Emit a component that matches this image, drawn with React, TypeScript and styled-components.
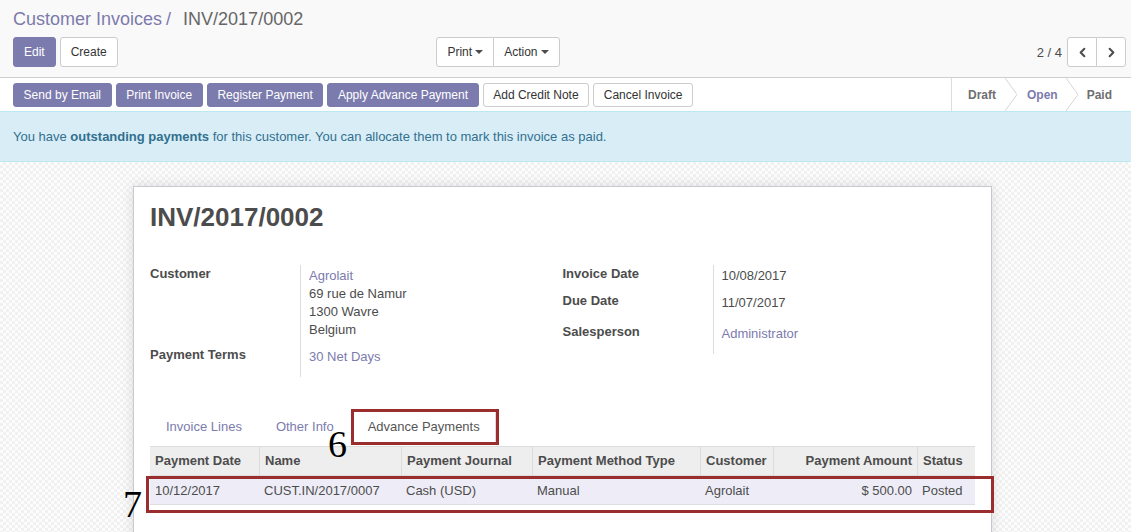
import React from "react";
import styled, { createGlobalStyle } from "styled-components";
import { ChevronLeft, ChevronRight } from "lucide-react";

const PURPLE = "#7c7bad";
const TEXT = "#4c4c4c";

const GlobalStyle = createGlobalStyle`
  html, body { margin: 0; padding: 0; }
  body {
    font-family: "Liberation Sans", Arial, sans-serif;
    font-size: 13px;
    color: ${TEXT};
    overflow: hidden;
    background: #fff;
  }
  * { box-sizing: border-box; }
`;

const Page = styled.div`
  width: 1131px;
  height: 532px;
  display: flex;
  flex-direction: column;
  overflow: hidden;
`;

/* ---------- control panel ---------- */
const ControlPanel = styled.div`
  background: #f9f9f9;
  border-bottom: 1px solid #cfcfcf;
  padding: 7px 5px 10px 13px;
`;

const Breadcrumb = styled.div`
  display: flex;
  align-items: baseline;
  font-size: 18px;
  line-height: 24px;
`;

const Crumb = styled.span`
  color: ${PURPLE};
`;

const CrumbSep = styled.span`
  color: ${PURPLE};
  margin: 0 12px 0 4px;
`;

const CrumbActive = styled.span`
  color: #666;
`;

const CpRow = styled.div`
  display: grid;
  grid-template-columns: 1fr 1fr;
  margin-top: 6px;
  height: 30px;
`;

const CpLeft = styled.div`
  display: flex;
  justify-content: space-between;
  padding-right: 10px;
`;

const CpRight = styled.div`
  display: flex;
  justify-content: flex-end;
  align-items: center;
`;

const ButtonGroup = styled.div<{ $gap?: number }>`
  display: flex;
  gap: ${(p) => p.$gap ?? 0}px;
`;

const Btn = styled.button<{ $primary?: boolean; $h?: number; $px?: number }>`
  font-family: inherit;
  font-size: 12px;
  height: ${(p) => p.$h ?? 30}px;
  padding: 0 ${(p) => p.$px ?? 10}px;
  border-radius: 3px;
  border: 1px solid ${(p) => (p.$primary ? PURPLE : "#ccc")};
  background: ${(p) => (p.$primary ? PURPLE : "#fff")};
  color: ${(p) => (p.$primary ? "#fff" : "#333")};
  display: inline-flex;
  align-items: center;
  cursor: pointer;
  white-space: nowrap;
`;

const JoinedBtn = styled(Btn)<{ $pos: "first" | "last" | "mid" }>`
  border-radius: ${(p) =>
    p.$pos === "first" ? "3px 0 0 3px" : p.$pos === "last" ? "0 3px 3px 0" : "0"};
  margin-left: ${(p) => (p.$pos === "first" ? 0 : -1)}px;
`;

const Caret = styled.span`
  display: inline-block;
  width: 0;
  height: 0;
  margin-left: 3px;
  border-top: 4px solid #4c4c4c;
  border-left: 4px solid transparent;
  border-right: 4px solid transparent;
`;

const PagerValue = styled.span`
  font-size: 13px;
  color: #4c4c4c;
  margin-right: 5px;
`;

const PagerBtn = styled(JoinedBtn)`
  width: 30px;
  padding: 0;
  justify-content: center;
  color: #4c4c4c;
`;

/* ---------- status bar ---------- */
const StatusBar = styled.div`
  display: flex;
  justify-content: space-between;
  align-items: center;
  height: 33px;
  padding: 0 5px 0 13px;
  background: #fff;
`;

const StatusSteps = styled.div`
  display: flex;
  align-items: stretch;
  height: 33px;
  border-left: 1px solid #ddd;
`;

const Step = styled.div<{ $current?: boolean; $pl: number; $pr: number }>`
  display: flex;
  align-items: center;
  font-size: 12px;
  font-weight: bold;
  color: ${(p) => (p.$current ? PURPLE : "#6f6f6f")};
  padding: 0 ${(p) => p.$pr}px 0 ${(p) => p.$pl}px;
`;

const StepArrow = () => (
  <svg width="12" height="33" viewBox="0 0 12 33" style={{ display: "block" }}>
    <polyline points="0,0 12,16.5 0,33" fill="none" stroke="#d6d6d6" strokeWidth="1" />
  </svg>
);

/* ---------- alert ---------- */
const Alert = styled.div`
  background: #d9edf7;
  border-top: 1px solid #bce8f1;
  border-bottom: 1px solid #bce8f1;
  color: #31708f;
  padding: 16px 13px 15px;
  line-height: 18px;
  font-size: 13px;
`;

/* ---------- sheet ---------- */
const SheetBg = styled.div`
  flex: 1;
  padding-top: 24px;
  background-color: #f8f8f8;
  background-image: repeating-conic-gradient(#f1f1f1 0% 25%, #fcfcfc 0% 50%);
  background-size: 6px 6px;
  overflow: hidden;
`;

const Sheet = styled.div`
  position: relative;
  width: 859px;
  min-height: 420px;
  margin-left: 133px;
  background: #fff;
  border: 1px solid #c8c8d3;
  box-shadow: 0 0 12px rgba(0, 0, 0, 0.12);
  padding: 16px;
`;

const Title = styled.h1`
  margin: 0;
  font-size: 26px;
  line-height: 29px;
  font-weight: bold;
  color: #4c4c4c;
`;

const Groups = styled.div`
  display: grid;
  grid-template-columns: 1fr 1fr;
  margin-top: 33px;
`;

const Group = styled.div`
  display: flex;
  flex-direction: column;
`;

const FieldRow = styled.div`
  display: grid;
  grid-template-columns: 150px 1fr;
`;

const Label = styled.div<{ $top: number; $bottom: number }>`
  font-weight: bold;
  line-height: 18px;
  padding-top: ${(p) => p.$top}px;
  padding-bottom: ${(p) => p.$bottom}px;
`;

const Value = styled.div<{ $top: number; $bottom: number }>`
  border-left: 1px solid #ddd;
  padding-left: 8px;
  line-height: 18px;
  padding-top: ${(p) => p.$top + 2}px;
  padding-bottom: ${(p) => p.$bottom}px;
`;

const Link = styled.div`
  color: ${PURPLE};
`;

const Tabs = styled.div`
  display: flex;
  margin-top: 32px;
  height: 34px;
`;

const Tab = styled.div<{ $active?: boolean }>`
  display: flex;
  align-items: center;
  padding: 0 15px;
  margin-right: 2px;
  color: ${(p) => (p.$active ? "#555" : PURPLE)};
  border: 1px solid ${(p) => (p.$active ? "#ddd" : "transparent")};
  border-bottom: none;
  border-radius: 4px 4px 0 0;
  background: #fff;
`;

const Table = styled.table`
  width: 100%;
  margin-top: 3px;
  border-collapse: separate;
  border-spacing: 0;
  table-layout: fixed;
`;

const Th = styled.th<{ $w: number; $right?: boolean }>`
  width: ${(p) => p.$w}px;
  background: #eee;
  text-align: ${(p) => (p.$right ? "right" : "left")};
  font-weight: bold;
  line-height: 15px;
  padding: 6px 5px 7px;
  border-top: 1px solid #ddd;
  border-bottom: 1px solid #ddd;
  white-space: nowrap;
  overflow: hidden;
  & + & {
    border-left: 1px solid #dcdcdc;
  }
`;

const Td = styled.td<{ $right?: boolean }>`
  background: #eeedf7;
  text-align: ${(p) => (p.$right ? "right" : "left")};
  line-height: 15px;
  padding: 7px 5px 6px;
  border-bottom: 1px solid #ddd;
  white-space: nowrap;
`;

/* ---------- annotations (overlaid on the screenshot) ---------- */
const MarkBox = styled.div<{ $l: number; $t: number; $w: number; $h: number }>`
  position: absolute;
  left: ${(p) => p.$l}px;
  top: ${(p) => p.$t}px;
  width: ${(p) => p.$w}px;
  height: ${(p) => p.$h}px;
  border: 3px solid #9a2e2e;
  pointer-events: none;
`;

const MarkNum = styled.div<{ $l: number; $t: number }>`
  position: absolute;
  left: ${(p) => p.$l}px;
  top: ${(p) => p.$t}px;
  font-family: "Liberation Serif", "Times New Roman", serif;
  font-size: 38px;
  line-height: 38px;
  color: #000;
`;

const columns = [
  { title: "Payment Date", w: 109 },
  { title: "Name", w: 142 },
  { title: "Payment Journal", w: 131 },
  { title: "Payment Method Type", w: 168 },
  { title: "Customer", w: 73 },
  { title: "Payment Amount", w: 144, right: true },
  { title: "Status", w: 58 },
];

const row = ["10/12/2017", "CUST.IN/2017/0007", "Cash (USD)", "Manual", "Agrolait", "$ 500.00", "Posted"];

export default function App() {
  return (
    <Page>
      <GlobalStyle />
      <ControlPanel>
        <Breadcrumb>
          <Crumb>Customer Invoices</Crumb>
          <CrumbSep>/</CrumbSep>
          <CrumbActive>INV/2017/0002</CrumbActive>
        </Breadcrumb>
        <CpRow>
          <CpLeft>
            <ButtonGroup $gap={4}>
              <Btn $primary>Edit</Btn>
              <Btn>Create</Btn>
            </ButtonGroup>
            <ButtonGroup>
              <JoinedBtn $pos="first" $px={10}>
                Print <Caret />
              </JoinedBtn>
              <JoinedBtn $pos="last">
                Action <Caret />
              </JoinedBtn>
            </ButtonGroup>
          </CpLeft>
          <CpRight>
            <PagerValue>2 / 4</PagerValue>
            <ButtonGroup>
              <PagerBtn $pos="first">
                <ChevronLeft size={15} strokeWidth={3.2} />
              </PagerBtn>
              <PagerBtn $pos="last">
                <ChevronRight size={15} strokeWidth={3.2} />
              </PagerBtn>
            </ButtonGroup>
          </CpRight>
        </CpRow>
      </ControlPanel>

      <StatusBar>
        <ButtonGroup $gap={4}>
          <Btn $primary $h={24} $px={9.6}>Send by Email</Btn>
          <Btn $primary $h={24} $px={9.6}>Print Invoice</Btn>
          <Btn $primary $h={24} $px={9.6}>Register Payment</Btn>
          <Btn $primary $h={24} $px={9.6}>Apply Advance Payment</Btn>
          <Btn $h={24} $px={9.6}>Add Credit Note</Btn>
          <Btn $h={24} $px={9.6}>Cancel Invoice</Btn>
        </ButtonGroup>
        <StatusSteps>
          <Step $pl={16} $pr={9}>Draft</Step>
          <StepArrow />
          <Step $current $pl={10} $pr={8}>Open</Step>
          <StepArrow />
          <Step $pl={9} $pr={14}>Paid</Step>
        </StatusSteps>
      </StatusBar>

      <Alert>
        You have <b>outstanding payments</b> for this customer. You can allocate them to mark this
        invoice as paid.
      </Alert>

      <SheetBg>
        <Sheet>
          <Title>INV/2017/0002</Title>
          <Groups>
            <Group>
              <FieldRow>
                <Label $top={0} $bottom={3}>Customer</Label>
                <Value $top={0} $bottom={3}>
                  <Link>Agrolait</Link>
                  <div>69 rue de Namur</div>
                  <div>1300 Wavre</div>
                  <div>Belgium</div>
                </Value>
              </FieldRow>
              <FieldRow>
                <Label $top={4} $bottom={11}>Payment Terms</Label>
                <Value $top={4} $bottom={11}>
                  <Link>30 Net Days</Link>
                </Value>
              </FieldRow>
            </Group>
            <Group>
              <FieldRow>
                <Label $top={0} $bottom={3}>Invoice Date</Label>
                <Value $top={0} $bottom={3}>10/08/2017</Value>
              </FieldRow>
              <FieldRow>
                <Label $top={4} $bottom={3}>Due Date</Label>
                <Value $top={4} $bottom={3}>11/07/2017</Value>
              </FieldRow>
              <FieldRow>
                <Label $top={8} $bottom={11}>Salesperson</Label>
                <Value $top={8} $bottom={11}>
                  <Link>Administrator</Link>
                </Value>
              </FieldRow>
            </Group>
          </Groups>

          <Tabs>
            <Tab>Invoice Lines</Tab>
            <Tab>Other Info</Tab>
            <Tab $active>Advance Payments</Tab>
          </Tabs>

          <Table>
            <thead>
              <tr>
                {columns.map((c) => (
                  <Th key={c.title} $w={c.w} $right={c.right}>
                    {c.title}
                  </Th>
                ))}
              </tr>
            </thead>
            <tbody>
              <tr>
                {row.map((v, i) => (
                  <Td key={i} $right={columns[i].right}>
                    {v}
                  </Td>
                ))}
              </tr>
            </tbody>
          </Table>

          <MarkBox $l={217} $t={222} $w={148} $h={36} />
          <MarkBox $l={12} $t={289} $w={848} $h={37} />
          <MarkNum $l={194} $t={238}>6</MarkNum>
          <MarkNum $l={-11} $t={298}>7</MarkNum>
        </Sheet>
      </SheetBg>
    </Page>
  );
}
